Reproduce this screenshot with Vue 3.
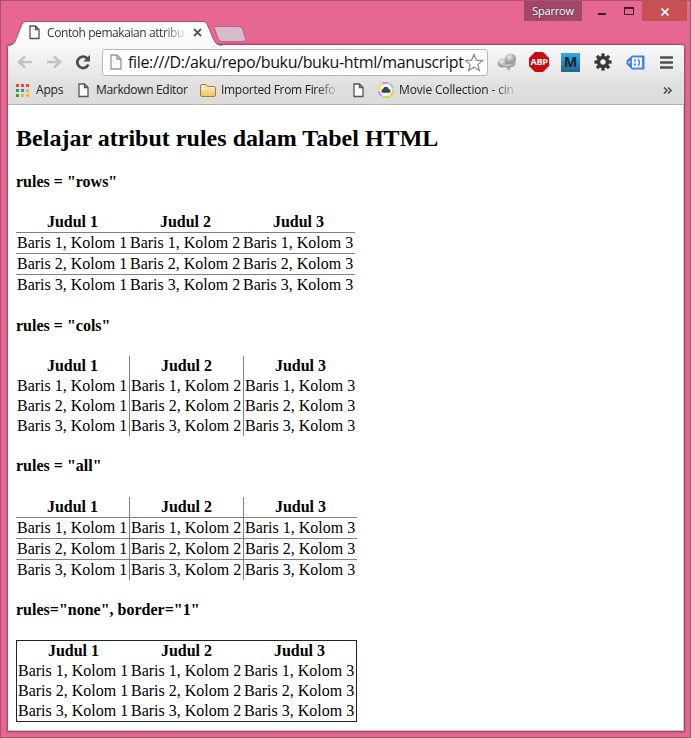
<script setup>
const columns = [1, 2, 3]
const rows = [1, 2, 3]
const examples = [
  { title: 'rules = "rows"', kind: 'rows' },
  { title: 'rules = "cols"', kind: 'cols' },
  { title: 'rules = "all"', kind: 'all' },
  { title: 'rules="none", border="1"', kind: 'none' },
]
const appColors = ['#f04438', '#f04438', '#f04438', '#2e9e58', '#3b82e8', '#f6b91c', '#2e9e58', '#f6b91c', '#f6b91c']
</script>

<template>
  <div class="window">
    <header class="titlebar">
      <svg class="tab-shape" width="250" height="26" viewBox="0 0 250 26">
        <defs>
          <linearGradient id="tabfill" x1="0" y1="0" x2="0" y2="1">
            <stop offset="0" stop-color="#ffffff" />
            <stop offset="1" stop-color="#f9f9f9" />
          </linearGradient>
        </defs>
        <path transform="translate(-2 0)" d="M207.500 5.500H232Q234.500 5.500 235.500 8L238.500 17.500Q239 20.500 236 20.500H215.500Q212.500 20.500 211.500 18L207.500 7.500Q206.500 5.500 208.500 5.500Z" fill="#d5bccb" stroke="#bd638c" />
        <path d="M0 26V24.500Q4.500 24 6 20.500L13 3Q14 .5 17 .5H194Q197 .5 198 3L205.500 20.500Q207.500 24.500 213 24.500V26Z" fill="url(#tabfill)" />
        <path d="M0 24.500Q4.500 24 6 20.500L13 3Q14 .5 17 .5H194Q197 .5 198 3L205.500 20.500Q207.500 24.500 213 24.500" fill="none" stroke="#ae4c70" />
      </svg>
      <div class="tab">
        <svg width="11" height="15" viewBox="0 0 11 15" class="page-icon"><path d="M1 1H6.500L10 4.500V13.500H1ZM6.500 1V4.500H10" /></svg>
        <span class="tab-title">Contoh pemakaian attribu</span>
        <svg class="close-tab" width="9" height="9" viewBox="0 0 9 9"><path d="M1 1L8 8M8 1L1 8" stroke="#555" stroke-width="1.800" /></svg>
      </div>
      <div class="controls">
        <span class="user">Sparrow</span>
        <svg class="min" width="8" height="3"><rect width="8" height="2" y="1" fill="#30242a" /></svg>
        <svg class="max" width="10" height="8"><path d="M.5 1H9.500V7.500H.5Z" fill="none" stroke="#30242a" /><path d="M0 1H10" stroke="#30242a" stroke-width="2" /></svg>
        <span class="close"><svg width="8" height="8" viewBox="0 0 8 8"><path d="M.5 .5L7.500 7.500M7.500 .5L.5 7.500" stroke="#fff" stroke-width="1.700" /></svg></span>
      </div>
    </header>

    <div class="frame">
      <div class="chrome">
        <nav class="toolbar">
          <svg class="back" width="16" height="14" viewBox="0 0 16 14"><path d="M8 1.500L2 7L8 12.500M2 7H15" fill="none" stroke="#c3c3c3" stroke-width="2.600" /></svg>
          <svg class="forward" width="16" height="14" viewBox="0 0 16 14"><path d="M8 1.500L14 7L8 12.500M14 7H1" fill="none" stroke="#c3c3c3" stroke-width="2.600" /></svg>
          <svg class="reload" width="16" height="16" viewBox="0 0 16 16"><path d="M12.300 4.500A5.700 5.700 0 1 0 13.300 10.500" fill="none" stroke="#505050" stroke-width="2.800" /><path d="M15 .8V7.500H8.300Z" fill="#505050" /></svg>
          <div class="address">
            <svg width="12" height="16" viewBox="0 0 12 16" class="url-page"><path d="M1 1H7L11 5V15H1ZM7 1V5H11" /></svg>
            <span class="url">file:///D:/aku/repo/buku/buku-html/manuscript</span>
            <svg class="star" width="20" height="19" viewBox="0 0 20 19"><path d="M10 1.500L12.400 7.100L18.400 7.600L13.900 11.600L15.300 17.400L10 14.300L4.700 17.400L6.100 11.600L1.600 7.600L7.600 7.100Z" fill="#fff" stroke="#898989" stroke-width="1.200" /></svg>
          </div>
          <svg class="balls" width="20" height="18" viewBox="0 0 20 18">
            <defs><radialGradient id="ball" cx=".4" cy=".3"><stop offset="0" stop-color="#f0f0f0" /><stop offset="1" stop-color="#9c9c9c" /></radialGradient></defs>
            <ellipse cx="6" cy="10" rx="5.500" ry="4.500" fill="url(#ball)" />
            <path d="M8 11Q13 14 19 9Q18.500 14 13.500 14.500L12 18L9 14.500Z" fill="#a8a8a8" />
            <circle cx="13.500" cy="6" r="5.500" fill="url(#ball)" />
            <path d="M2 9Q6 13 11 12.500" stroke="#dedede" stroke-width="1" fill="none" />
          </svg>
          <span class="abp"><b>ABP</b></span>
          <span class="m-icon">M</span>
          <svg class="gear" width="18" height="18" viewBox="-9 -9 18 18">
            <g fill="#383838"><rect v-for="n in 8" :key="n" x="-1.600" y="-8.600" width="3.200" height="4" :transform="`rotate(${n * 45})`" /></g>
            <circle r="4.500" fill="none" stroke="#383838" stroke-width="3.400" />
          </svg>
          <svg class="tag" width="19" height="15" viewBox="0 0 19 15"><path d="M6 .5H17.500Q18.500 .5 18.500 1.500V13.500Q18.500 14.500 17.500 14.500H6L.5 9V5.500Z" fill="#3f83ef" /><circle cx="3.500" cy="7.300" r="1.100" fill="#fff" /><path d="M6 2.500H16V12.500H6Z" fill="#fff" /><path d="M8 4.500H10V6.500H8ZM8 8.500H10V10.500H8Z" fill="#3f83ef" /><path d="M12 3.800Q14.800 7.500 12 11.200" fill="none" stroke="#3f83ef" stroke-width="1.400" /></svg>
          <svg class="menu" width="13" height="13" viewBox="0 0 13 13"><path d="M1 1.500H12M1 6.500H12M1 11.500H12" stroke="#505050" stroke-width="2.600" stroke-linecap="round" /></svg>
        </nav>
        <nav class="bookmarks">
          <span class="apps-icon"><i v-for="(c, i) in appColors" :key="i" :style="{ background: c }"></i></span>
          <span class="t-apps">Apps</span>
          <svg width="11" height="15" viewBox="0 0 11 15" class="page-icon"><path d="M1 1H6.500L10 4.500V13.500H1ZM6.500 1V4.500H10" /></svg>
          <span class="t-markdown">Markdown Editor</span>
          <svg class="folder" width="16" height="13" viewBox="0 0 16 13">
            <defs><linearGradient id="folder" x1="0" y1="0" x2="0" y2="1"><stop offset="0" stop-color="#ffedb8" /><stop offset="1" stop-color="#efc370" /></linearGradient></defs>
            <path d="M.5 2Q.5 .5 2 .5H6L7.500 2.500H14Q15.500 2.500 15.500 4V11Q15.500 12.500 14 12.500H2Q.5 12.500 .5 11Z" fill="url(#folder)" stroke="#ab7935" />
            <path d="M1.500 4.500H6L7.500 3.500H14.500" fill="none" stroke="#fff5d5" />
          </svg>
          <span class="t-imported">Imported From Firefo</span>
          <svg width="11" height="15" viewBox="0 0 11 15" class="page-icon second"><path d="M1 1H6.500L10 4.500V13.500H1ZM6.500 1V4.500H10" /></svg>
          <svg class="movie" width="16" height="16" viewBox="0 0 16 16">
            <circle cx="8" cy="8" r="7.500" fill="#f5f5f5" />
            <g fill="none" stroke-width="2">
              <path d="M4.200 1.700A7.200 7.200 0 0 1 10.200 1.200" stroke="#ee83d6" />
              <path d="M11 1.500A7.200 7.200 0 0 1 15.100 6.800" stroke="#86dfc0" />
              <path d="M15.200 7.500A7.200 7.200 0 0 1 12.200 13.900" stroke="#f4c74b" />
              <path d="M11.500 14.300A7.200 7.200 0 0 1 4.500 14.300" stroke="#b6e22c" />
              <path d="M3.800 13.900A7.200 7.200 0 0 1 .9 9.300" stroke="#b69be6" />
              <path d="M.8 8.500A7.200 7.200 0 0 1 3.600 2.200" stroke="#f5e728" />
            </g>
            <path d="M4.500 10.700A2 2 0 0 1 5 7A3 3 0 0 1 10.800 7A2 2 0 0 1 11.500 10.700Z" fill="#3c4650" />
          </svg>
          <span class="t-movie">Movie Collection - cin</span>
          <svg class="more" width="9" height="7" viewBox="0 0 9 7"><path d="M1 .5L4 3.500L1 6.500M5 .5L8 3.500L5 6.500" fill="none" stroke="#555" stroke-width="1.700" /></svg>
        </nav>
      </div>
      <main class="page">
        <h2>Belajar atribut rules dalam Tabel HTML</h2>
        <section v-for="example in examples" :key="example.kind" :class="example.kind">
          <h4>{{ example.title }}</h4>
          <table>
            <thead><tr><th v-for="c in columns" :key="c">Judul {{ c }}</th></tr></thead>
            <tbody>
              <tr v-for="r in rows" :key="r"><td v-for="c in columns" :key="c">Baris {{ r }}, Kolom {{ c }}</td></tr>
            </tbody>
          </table>
        </section>
      </main>
    </div>
  </div>
</template>

<style>
body { margin: 0; overflow: hidden; }
</style>

<style scoped>
* { box-sizing: border-box; }
svg { display: block; flex: none; }
.window { width: 691px; height: 738px; background: #e66792; border: 1px solid #ae4e70; padding: 0 5px 5px 6px; display: flex; flex-direction: column; font-family: "Open Sans", "Noto Sans", sans-serif; }
.titlebar { height: 43px; flex: none; position: relative; display: flex; justify-content: space-between; align-items: flex-start; }
.tab-shape { position: absolute; left: 2px; top: 20px; z-index: 2; }
.tab { position: relative; z-index: 3; display: flex; align-items: center; height: 25px; margin: 19px 0 0 22px; }
.tab-title { width: 140px; margin-left: 7px; white-space: nowrap; font-size: 12px; letter-spacing: -.42px; line-height: 18px; color: #333; -webkit-mask-image: linear-gradient(90deg, #000 115px, transparent 141px); mask-image: linear-gradient(90deg, #000 115px, transparent 141px); }
.close-tab { margin-left: 6px; }
.page-icon path { fill: #fbfbfb; stroke: #555; stroke-width: 1.300; }
.controls { display: flex; align-items: flex-start; margin-right: -2px; }
.user { width: 58px; height: 20px; background: #a2476a; color: #fff; font-size: 11px; letter-spacing: -.2px; line-height: 20px; text-align: center; text-shadow: 0 0 2px #333; }
.min { margin: 11px 0 0 16px; }
.max { margin: 6px 0 0 18px; }
.close { width: 45px; height: 20px; margin-left: 8px; background: #c75050; display: grid; place-items: center; padding-top: 2px; }
.frame { flex: 1; min-height: 0; border: 1px solid #a84b6d; border-radius: 4px 4px 0 0; box-shadow: 0 0 2px #9c345a; background: #fff; display: flex; flex-direction: column; overflow: hidden; }
.chrome { height: 60px; flex: none; background: linear-gradient(#f9f9f9, #dedede 75%, #dcdcdc); border-bottom: 1px solid #b4b4b4; }
.toolbar { height: 34px; display: flex; align-items: center; padding: 0 0 0 10px; }
.back { margin-left: -1px; }
.forward { margin-left: 13px; }
.reload { margin-left: 13px; }
.address { width: 386px; height: 27px; margin-left: 11px; background: #fff; border: 1px solid #b9b9b9; border-radius: 3px; display: flex; align-items: center; padding-left: 7px; }
.url-page path { fill: #fafafa; stroke: #969696; stroke-width: 1.300; }
.url { width: 336px; margin-left: 6px; white-space: nowrap; font-size: 16px; letter-spacing: -.35px; line-height: 22px; color: #111; }
.star { margin-left: 0; }
.balls { margin-left: 9px; }
.abp { width: 20px; height: 20px; margin-left: 12px; background: #c70d12; clip-path: polygon(30% 0, 70% 0, 100% 30%, 100% 70%, 70% 100%, 30% 100%, 0 70%, 0 30%); color: #fff; font-size: 9px; letter-spacing: -.3px; line-height: 20px; display: flex; justify-content: center; }
.m-icon { width: 19px; height: 19px; margin-left: 12px; background: linear-gradient(#29afea, #20658b); color: #17242c; font-size: 14px; font-weight: 700; line-height: 18px; text-align: center; }
.gear { margin-left: 14px; }
.tag { margin-left: 14px; }
.menu { margin-left: 15px; }
.bookmarks { height: 22px; display: flex; align-items: center; padding-left: 8px; color: #222; font-size: 12px; line-height: 18px; white-space: nowrap; }
.bookmarks span { flex: none; }
.bookmarks .apps-icon { width: 13px; display: grid; grid-template-columns: repeat(3, 3px); gap: 2px; }
.apps-icon i { width: 3px; height: 3px; }
.t-apps { width: 34px; margin-left: 7px; letter-spacing: -.2px; }
.bookmarks .page-icon { margin-left: 8px; }
.t-markdown { width: 97px; margin-left: 7px; letter-spacing: -.33px; }
.folder { margin-left: 7px; }
.t-imported { width: 116px; margin-left: 5px; letter-spacing: -.3px; -webkit-mask-image: linear-gradient(90deg, #000 96px, transparent 118px); mask-image: linear-gradient(90deg, #000 96px, transparent 118px); }
.bookmarks .second { margin-left: 16px; }
.movie { margin-left: 14px; }
.t-movie { width: 118px; margin-left: 5px; letter-spacing: -.16px; -webkit-mask-image: linear-gradient(90deg, #000 96px, transparent 118px); mask-image: linear-gradient(90deg, #000 96px, transparent 118px); }
.more { margin-left: 146px; }
.page { flex: 1; padding: 20px 8px 0; border-right: 1px solid #c5c5c5; border-bottom: 1px solid #c5c5c5; color: #000; font: 16px/18px "Liberation Serif", serif; }
h2 { margin: 0 0 20px; font-size: 24px; line-height: 27px; letter-spacing: .02px; }
h4 { margin: 0 0 21px; font-size: 16px; line-height: 19px; }
section + section { margin-top: 21px; }
table { border-collapse: separate; border-spacing: 0; table-layout: fixed; width: 339px; }
th, td { padding: 1px; height: 20px; white-space: nowrap; }
td { text-align: left; }
.rows td, .all td { border-top: 1px solid #808080; height: 21px; }
.cols table, .all table { width: 341px; }
.cols :is(th, td) + :is(th, td), .all :is(th, td) + :is(th, td) { border-left: 1px solid #808080; }
.cols :is(th, td), .all :is(th, td) { width: 114px; }
.cols :is(th, td):first-child, .all :is(th, td):first-child { width: 113px; }
section.all, section.none { margin-top: 20px; }
.all h4 { margin-bottom: 22px; }
.none table { width: 341px; border: 1px solid #222; }
</style>
